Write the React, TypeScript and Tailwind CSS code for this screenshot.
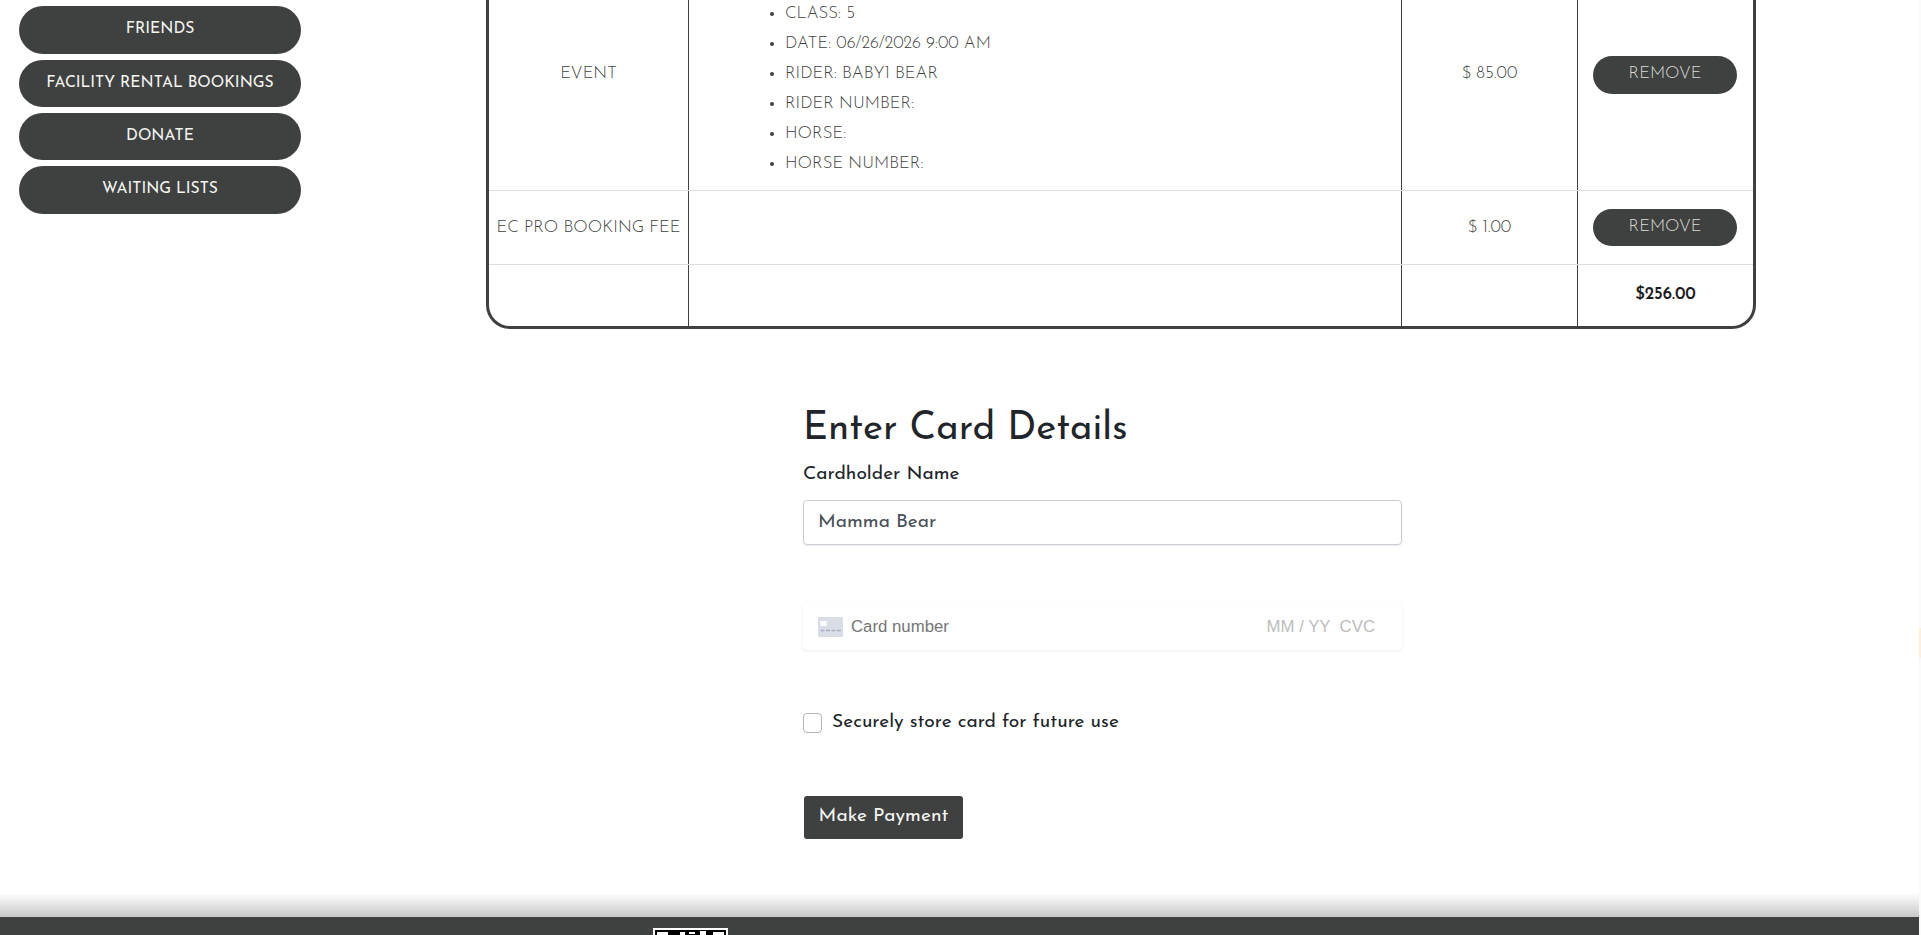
const font = "font-['Josefin_Sans','Lato','Noto_Sans',sans-serif]";

function NavPill({ label, h }: { label: string; h: string }) {
  return (
    <div className={`w-[282px] ${h} rounded-[24px] bg-[#3e4140] text-[#f4f4f0] text-[15.7px] leading-[20px] pt-[13px] text-center`}>
      {label}
    </div>
  );
}

function RemoveBtn({ h = "h-[38px]" }: { h?: string }) {
  return (
    <div className={`-ml-[1px] w-[144px] ${h} rounded-[19px] bg-[#3e4140] text-[#dcdcd8] text-[16.8px] leading-[20px] pt-[8px] text-center font-light`}>
      REMOVE
    </div>
  );
}

const items = ["CLASS: 5", "DATE: 06/26/2026 9:00 AM", "RIDER: BABY1 BEAR", "RIDER NUMBER:", "HORSE:", "HORSE NUMBER:"];

export default function App() {
  return (
    <div className={`relative h-[935px] w-[1921px] overflow-hidden bg-white ${font}`}>
      <div className="flex h-[917px] items-start">
        <aside className="flex w-[486px] shrink-0 flex-col gap-[6px] pl-[19px] pt-[6px]">
          <NavPill label="FRIENDS" h="h-[48px]" />
          <NavPill label="FACILITY RENTAL BOOKINGS" h="h-[47px]" />
          <NavPill label="DONATE" h="h-[47px]" />
          <NavPill label="WAITING LISTS" h="h-[48px]" />
        </aside>
        <main className="w-[1270px] shrink-0">
          <div className="h-[329px] w-[1270px] overflow-hidden rounded-b-[24px] border-x-[3px] border-b-[3px] border-[#3e4140] text-[16.8px] text-[#3e4140] font-light">
            <div className="grid h-[191px] grid-cols-[200px_713px_176px_175px] border-b border-[#dddddd]">
              <div className="flex items-start justify-center pt-[61px] border-r border-[#3e4140]">EVENT</div>
              <ul className="border-r border-[#3e4140] pl-[96px] -mt-[1px] leading-[30px] list-disc">
                {items.map((t) => (
                  <li key={t}>{t}</li>
                ))}
              </ul>
              <div className="flex justify-center pt-[61px] border-r border-[#3e4140]">$ 85.00</div>
              <div className="flex justify-center pt-[56px]"><RemoveBtn /></div>
            </div>
            <div className="grid h-[74px] grid-cols-[200px_713px_176px_175px] border-b border-[#dddddd]">
              <div className="flex justify-center pt-[24px] border-r border-[#3e4140] whitespace-nowrap">EC PRO BOOKING FEE</div>
              <div className="border-r border-[#3e4140]"></div>
              <div className="flex justify-center pt-[24px] border-r border-[#3e4140]">$ 1.00</div>
              <div className="flex justify-center pt-[18px]"><RemoveBtn h="h-[37px]" /></div>
            </div>
            <div className="grid h-[61px] grid-cols-[200px_713px_176px_175px]">
              <div className="border-r border-[#3e4140]"></div>
              <div className="border-r border-[#3e4140]"></div>
              <div className="border-r border-[#3e4140]"></div>
              <div className="flex justify-center pt-[17px] font-semibold text-[16.8px] text-[#1c1c1c]">$256.00</div>
            </div>
          </div>

          <section className="ml-[317px] w-[599px] pt-[79px]">
            <h2 className="text-[38.4px] leading-[43px] font-normal text-[#212529]">Enter Card Details</h2>
            <label className="mt-[12px] block text-[19.2px] leading-[24px] font-normal text-[#212529]">Cardholder Name</label>
            <div className="mt-[13px] flex h-[45px] items-center rounded-[4px] border border-[#c9ced6] px-[14px] pt-[1px] text-[19.2px] text-[#495057] shadow-[0_1px_2px_rgba(0,0,0,0.08)]">
              Mamma Bear
            </div>
            <div className="mt-[57px] flex h-[48px] items-center rounded-[4px] pl-[15px] pr-[27px] pt-[1px] shadow-[0_1px_3px_rgba(0,0,0,0.08)] font-['Liberation_Sans',sans-serif] text-[16.8px] font-normal">
              <svg width="25" height="20" viewBox="0 0 25 20" className="mr-[8px] shrink-0">
                <rect width="25" height="20" rx="1" fill="#d9dde6" />
                <rect x="2.5" y="4" width="6" height="5" fill="#ffffff" />
                <path d="M2.5 13.5h4M8 13.5h4M13.5 13.5h4M19 13.5h4" stroke="#a9afbd" strokeWidth="1.5" />
              </svg>
              <span className="text-[#757575]">Card number</span>
              <span className="ml-auto whitespace-pre text-[#bdbdbd]">MM / YY  CVC</span>
            </div>
            <div className="mt-[61px] flex h-[24px] items-center">
              <span className="h-[20px] w-[19px] rounded-[4px] border border-[#b5b5b5] bg-white"></span>
              <span className="ml-[10px] text-[19.2px] font-normal text-[#212529]">Securely store card for future use</span>
            </div>
            <button className="mt-[61px] block h-[43px] w-[159px] rounded-[3px] bg-[#3e4140] pb-[1px] text-[19.2px] font-normal text-[#f4f4f0] ml-[1px]">
              Make Payment
            </button>
          </section>
        </main>
      </div>
      <div className="h-[18px] bg-[#3e4140]"></div>
      <div className="absolute left-0 right-0 top-[893px] h-[24px] bg-gradient-to-b from-white to-[#c8c8c8]"></div>
      <svg className="absolute left-[653px] top-[928px]" width="75" height="7" viewBox="0 0 75 7">
        <rect width="75" height="7" fill="#ffffff" />
        <rect x="2" y="2" width="71" height="5" fill="#000000" />
        <rect x="4" y="4" width="11" height="3" fill="#ffffff" />
        <rect x="60" y="4" width="11" height="3" fill="#ffffff" />
        <rect x="27" y="4" width="5" height="3" fill="#ffffff" />
        <rect x="36" y="4" width="6" height="2" fill="#ffffff" />
        <rect x="47" y="3" width="6" height="4" fill="#ffffff" />
      </svg>
      <div className="absolute right-0 top-0 h-full w-[2px] bg-[#fafafa]"></div>
      <div className="absolute right-0 top-[628px] h-[30px] w-[2px] bg-[#fdeeda]"></div>
    </div>
  );
}
